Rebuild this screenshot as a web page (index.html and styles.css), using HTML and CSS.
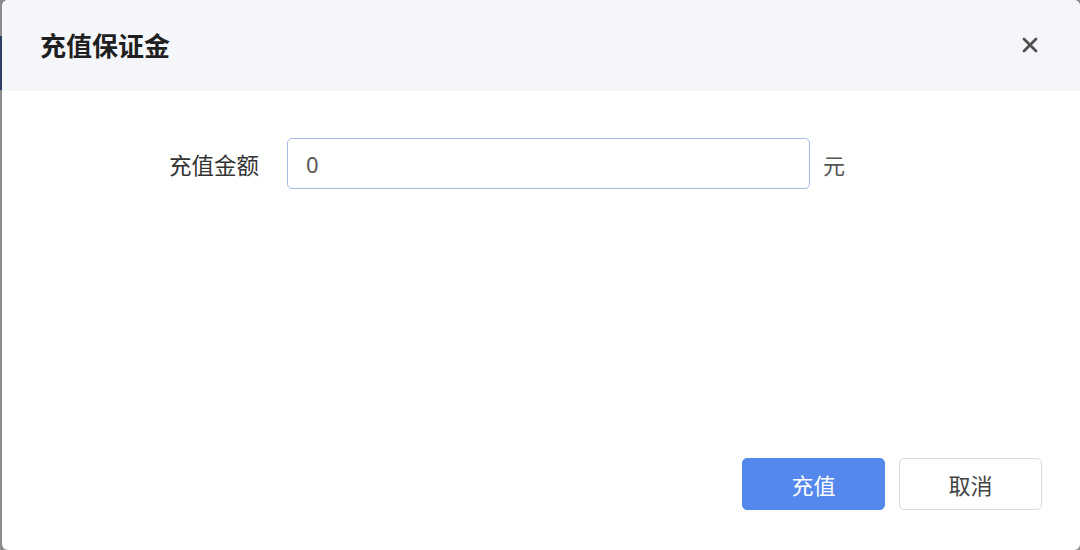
FILE: index.html
```html
<!DOCTYPE html>
<html lang="zh-CN">
<head>
<meta charset="utf-8">
<title>充值保证金</title>
<link rel="stylesheet" href="styles.css">
</head>
<body>
<div class="page">
  <div class="edge">
    <div class="edge-top"></div>
    <div class="edge-mark"></div>
    <div class="edge-rest"></div>
  </div>
  <div class="modal">
    <div class="modal-header">
      <div class="modal-title">充值保证金</div>
      <button class="close-btn" aria-label="关闭">
        <svg width="16" height="16" viewBox="0 0 16 16"><path d="M2 2 L14 14 M14 2 L2 14" stroke="#505050" stroke-width="2.8" stroke-linecap="round"/></svg>
      </button>
    </div>
    <div class="modal-body">
      <div class="form-row">
        <label class="form-label">充值金额</label>
        <div class="input-box">0</div>
        <span class="unit">元</span>
      </div>
    </div>
    <div class="modal-footer">
      <button class="btn btn-primary">充值</button>
      <button class="btn btn-default">取消</button>
    </div>
  </div>
</div>
</body>
</html>
```
FILE: styles.css
```css
html, body {
  margin: 0;
  padding: 0;
}
body {
  font-family: "Noto Sans CJK SC", "Noto Sans", "Liberation Sans", sans-serif;
  background: #8c8c8c;
}
.page {
  display: flex;
  width: 1080px;
  height: 550px;
  background: #8c8c8c;
}
.edge {
  width: 2px;
  display: flex;
  flex-direction: column;
}
.edge-top { height: 36px; }
.edge-mark { height: 54px; background: #2e3d66; }
.edge-rest { flex: 1; }
.modal {
  flex: 1;
  background: #fff;
  border-radius: 6px;
  display: flex;
  flex-direction: column;
  overflow: hidden;
}
.modal-header {
  height: 91px;
  flex: none;
  background: #f5f6f9;
  display: flex;
  align-items: center;
  justify-content: space-between;
  padding: 0 39px 0 38px;
  box-sizing: border-box;
}
.modal-title {
  font-size: 26px;
  font-weight: 700;
  color: #1f1f1f;
  margin-top: -3px;
}
.close-btn {
  border: none;
  background: transparent;
  padding: 0;
  width: 22px;
  height: 22px;
  display: flex;
  align-items: center;
  justify-content: center;
  cursor: pointer;
  margin-top: -2px;
}
.modal-body {
  flex: 1;
  padding-top: 47px;
}
.form-row {
  display: flex;
  align-items: center;
}
.form-label {
  width: 257px;
  text-align: right;
  font-size: 22.5px;
  color: #333;
  margin-right: 28px;
}
.input-box {
  width: 523px;
  height: 51px;
  box-sizing: border-box;
  border: 1px solid #a3b9e6;
  border-radius: 5px;
  padding-left: 18px;
  display: flex;
  align-items: center;
  font-size: 22px;
  color: #555;
  font-family: "Noto Sans", "Liberation Sans", sans-serif;
}
.unit {
  margin-left: 13px;
  font-size: 22px;
  color: #555;
}
.modal-footer {
  display: flex;
  justify-content: flex-end;
  gap: 14px;
  padding: 0 38px 40px 0;
}
.btn {
  width: 143px;
  height: 52px;
  box-sizing: border-box;
  border-radius: 5px;
  font-family: "Noto Sans CJK SC", sans-serif;
  font-size: 22px;
  cursor: pointer;
}
.btn-primary {
  background: #5588ec;
  border: 1px solid #5588ec;
  color: #fff;
}
.btn-default {
  background: #fff;
  border: 1px solid #d9d9d9;
  color: #444;
}
```
